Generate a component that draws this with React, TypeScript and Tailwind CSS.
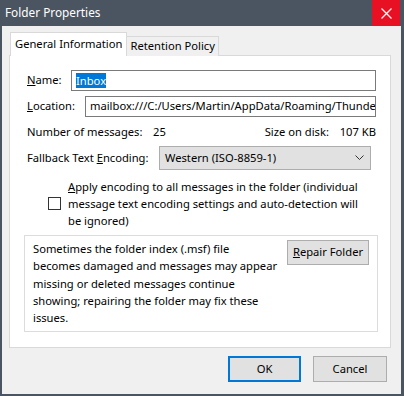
const font = "font-['Noto_Sans','Liberation_Sans',sans-serif]";

const CloseIcon = () => (
  <svg width="11" height="11" viewBox="0 0 11 11" fill="none" stroke="white" strokeWidth="1.2">
    <path d="M0.5 0.5 L10.5 10.5 M10.5 0.5 L0.5 10.5" />
  </svg>
);

const Chevron = () => (
  <svg width="9" height="6" viewBox="0 0 9 6" fill="none" stroke="#333" strokeWidth="1">
    <path d="M0.5 0.5 L4.5 4.5 L8.5 0.5" />
  </svg>
);

export default function App() {
  return (
    <div className={`${font} w-[404px] h-[396px] bg-[#4b5562] pl-[2px] pr-[3px] pb-[2px] flex flex-col text-[11.2px] text-[#000] overflow-hidden`}>
      {/* title bar */}
      <div className="h-[26px] flex items-center -ml-[2px] -mr-[3px]">
        <span className="pl-[5px] text-white text-[11.8px] flex-1">Folder Properties</span>
        <div className="w-[28px] h-[26px] bg-[#e81123] flex items-center justify-center mr-[4px]">
          <CloseIcon />
        </div>
      </div>

      <div className="flex-1 bg-[#f0f0f0] flex flex-col">
        {/* tabs */}
        <div className="flex items-end pt-[6px] pl-[8px] h-[30px] relative z-10 whitespace-nowrap">
          <div className="h-[24px] px-[4px] bg-white border border-b-0 border-[#d9d9d9] flex items-center">
            General Information
          </div>
          <div className="h-[20px] px-[3px] bg-[#f0f0f0] border border-l-0 border-b-0 border-[#d9d9d9] flex items-center">
            Retention Policy
          </div>
        </div>

        {/* panel */}
        <div className="-mt-[1px] ml-[7px] mr-[10px] h-[293px] bg-white border border-[#d9d9d9] flex flex-col">
          <div className="pt-[14px] pl-[17px] pr-[14px] flex flex-col whitespace-nowrap">
            <div className="flex items-center h-[21px]">
              <span className="w-[44px] shrink-0"><span className="underline">N</span>ame:</span>
              <div className="flex-1 h-[21px] border border-[#7a7a7a] flex items-center pl-[4px]">
                <span className="bg-[#0078d7] text-white leading-[15px]">Inbox</span>
              </div>
            </div>
            <div className="mt-[5px] flex items-center h-[21px]">
              <span className="w-[58px] shrink-0"><span className="underline">L</span>ocation:</span>
              <div className="flex-1 min-w-0 h-[21px] border border-[#7a7a7a] flex items-center pl-[4px] overflow-hidden">
                mailbox:///C:/Users/Martin/AppData/Roaming/Thunderbird/Profiles
              </div>
            </div>
            <div className="mt-[6px] h-[18px] flex items-center justify-between">
              <div className="flex">
                <span className="w-[126px]">Number of messages:</span>
                <span>25</span>
              </div>
              <div className="flex">
                <span className="w-[75px]">Size on disk:</span>
                <span>107 KB</span>
              </div>
            </div>
            <div className="mt-[5px] flex items-center h-[24px]">
              <span className="w-[132px] shrink-0">Fallback Text <span className="underline">E</span>ncoding:</span>
              <div className="w-[212px] h-[24px] bg-[#e1e1e1] border border-[#adadad] flex items-center justify-between pl-[5px] pr-[6px]">
                <span>Western (ISO-8859-1)</span>
                <Chevron />
              </div>
            </div>
            <div className="mt-[8px] flex items-center pl-[21px]">
              <div className="w-[13px] h-[13px] border border-[#333] bg-white shrink-0" />
              <div className="ml-[7px] leading-[17px]">
                <span className="underline">A</span>pply encoding to all messages in the folder (individual
                <br />
                message text encoding settings and auto-detection will
                <br />
                be ignored)
              </div>
            </div>
            <div className="mt-[6px] -ml-[3px] -mr-[2px] h-[97px] border border-[#dcdcdc] flex justify-between pl-[8px] pr-[8px]">
              <div className="pt-[4px] leading-[17.3px]">
                Sometimes the folder index (.msf) file
                <br />
                becomes damaged and messages may appear
                <br />
                missing or deleted messages continue
                <br />
                showing; repairing the folder may fix these
                <br />
                issues.
              </div>
              <div className="mt-[4px] w-[82px] h-[25px] shrink-0 bg-[#e1e1e1] border border-[#adadad] flex items-center justify-center">
                <span><span className="underline">R</span>epair Folder</span>
              </div>
            </div>
          </div>
        </div>

        {/* footer */}
        <div className="mt-[8px] flex justify-end pr-[14px] gap-[12px]">
          <div className="w-[73px] h-[26px] bg-[#e1e1e1] border-2 border-[#0078d7] flex items-center justify-center">OK</div>
          <div className="w-[74px] h-[26px] bg-[#e1e1e1] border border-[#adadad] flex items-center justify-center">Cancel</div>
        </div>
      </div>
    </div>
  );
}
